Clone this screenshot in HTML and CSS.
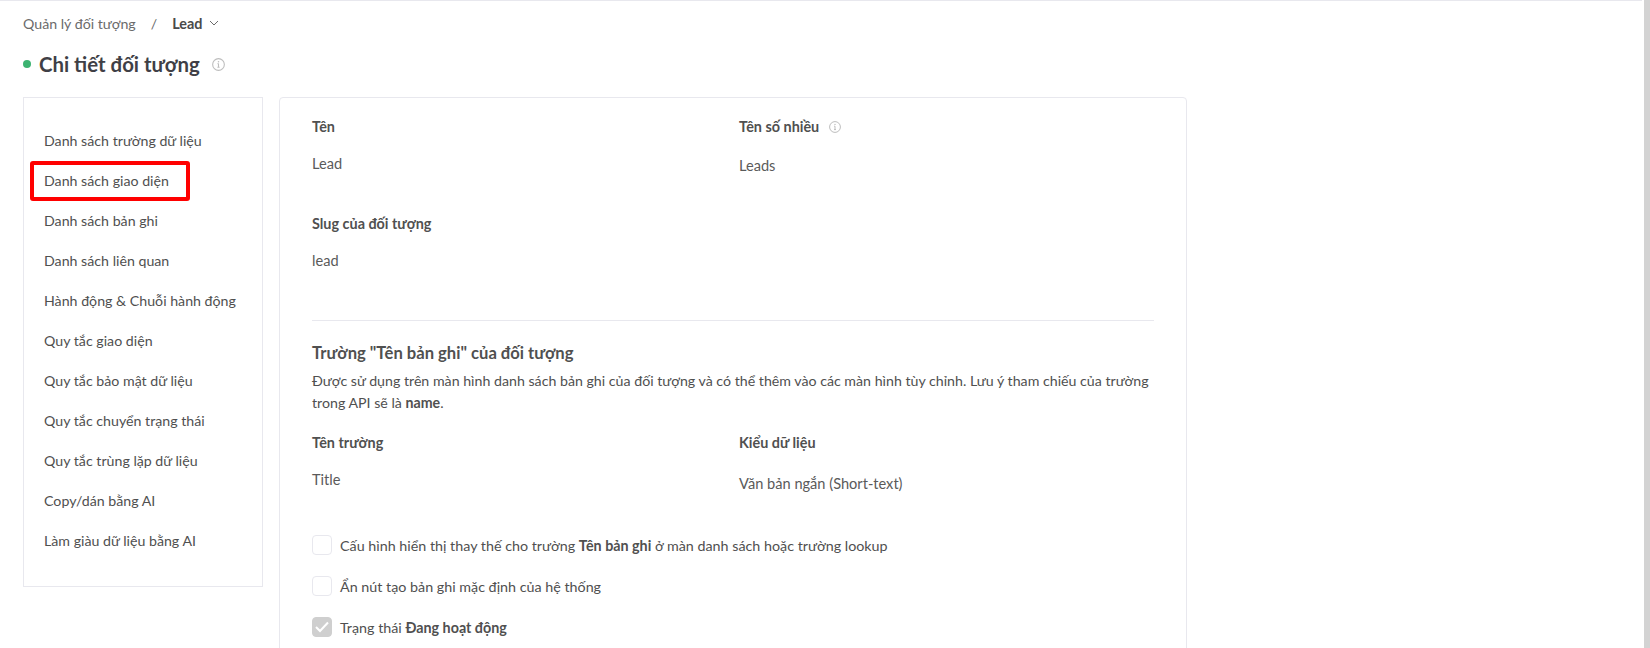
FILE: index.html
```html
<!DOCTYPE html>
<html lang="vi">
<head>
    <meta charset="UTF-8">
    <meta name="viewport" content="width=device-width, initial-scale=1.0">
    <title>Chi tiết đối tượng</title>
    <link rel="stylesheet" href="styles.css">
</head>
<body>
    <div class="page">
        <div class="breadcrumb">
            <span class="crumb">Quản lý đối tượng</span>
            <span class="crumb-sep">/</span>
            <span class="crumb-current">Lead</span>
            <svg class="chevron" width="10" height="10" viewBox="0 0 10 10"><path d="M1 3l4 4 4-4" fill="none" stroke="#6b6b6b" stroke-width="1"/></svg>
        </div>

        <div class="title-row">
            <span class="status-dot"></span>
            <h1>Chi tiết đối tượng</h1>
            <svg class="info info-lg" viewBox="0 0 12 12"><circle cx="6" cy="6" r="5.4" fill="none" stroke="#bdbdbd"/><path d="M6 5.2v3.2M5 8.6h2M5.1 5.2H6" fill="none" stroke="#bdbdbd"/><circle cx="6" cy="3.4" r=".7" fill="#bdbdbd"/></svg>
        </div>

        <div class="layout">
            <nav class="sidebar">
                <a class="nav-item">Danh sách trường dữ liệu</a>
                <a class="nav-item nav-marked">Danh sách giao diện</a>
                <a class="nav-item">Danh sách bản ghi</a>
                <a class="nav-item">Danh sách liên quan</a>
                <a class="nav-item">Hành động &amp; Chuỗi hành động</a>
                <a class="nav-item">Quy tắc giao diện</a>
                <a class="nav-item">Quy tắc bảo mật dữ liệu</a>
                <a class="nav-item">Quy tắc chuyển trạng thái</a>
                <a class="nav-item">Quy tắc trùng lặp dữ liệu</a>
                <a class="nav-item">Copy/dán bằng AI</a>
                <a class="nav-item">Làm giàu dữ liệu bằng AI</a>
            </nav>

            <main class="card">
                <div class="field-grid">
                    <div class="field">
                        <div class="field-label">Tên</div>
                        <div class="field-value">Lead</div>
                    </div>
                    <div class="field">
                        <div class="field-label">Tên số nhiều
                            <svg class="info" viewBox="0 0 12 12"><circle cx="6" cy="6" r="5.4" fill="none" stroke="#bdbdbd"/><path d="M6 5.2v3.2M5 8.6h2M5.1 5.2H6" fill="none" stroke="#bdbdbd"/><circle cx="6" cy="3.4" r=".7" fill="#bdbdbd"/></svg>
                        </div>
                        <div class="field-value value-low">Leads</div>
                    </div>
                    <div class="field field-slug">
                        <div class="field-label">Slug của đối tượng</div>
                        <div class="field-value">lead</div>
                    </div>
                </div>

                <hr class="divider">

                <h2>Trường "Tên bản ghi" của đối tượng</h2>
                <p class="desc">Được sử dụng trên màn hình danh sách bản ghi của đối tượng và có thể thêm vào các màn hình tùy chỉnh. Lưu ý tham chiếu của trường trong API sẽ là <b>name</b>.</p>

                <div class="field-grid">
                    <div class="field">
                        <div class="field-label">Tên trường</div>
                        <div class="field-value">Title</div>
                    </div>
                    <div class="field">
                        <div class="field-label">Kiểu dữ liệu</div>
                        <div class="field-value value-lower">Văn bản ngắn (Short-text)</div>
                    </div>
                </div>

                <div class="checks">
                    <label class="check"><span class="box"></span><span>Cấu hình hiển thị thay thế cho trường <b>Tên bản ghi</b> ở màn danh sách hoặc trường lookup</span></label>
                    <label class="check"><span class="box"></span><span>Ẩn nút tạo bản ghi mặc định của hệ thống</span></label>
                    <label class="check"><span class="box box-checked"><svg width="14" height="14" viewBox="0 0 14 14"><path d="M1 7l4 4 8-8.5" fill="none" stroke="#fff" stroke-width="2"/></svg></span><span>Trạng thái <b>Đang hoạt động</b></span></label>
                </div>
            </main>
        </div>
    </div>
    <div class="scroll-rail"></div>
</body>
</html>
```
FILE: styles.css
```css
* {
    box-sizing: border-box;
}

html, body {
    margin: 0;
    height: 100%;
    overflow: hidden;
    background-color: white;
    font-family: Lato, "Noto Sans", sans-serif;
    font-size: 14.2px;
    color: #505050;
}

body {
    display: flex;
    gap: 2px;
}

.page {
    flex: 1;
    height: 100vh;
    overflow: hidden;
    padding-left: 23px;
    border-top: 1px solid #e8e8ee;
}

.scroll-rail {
    width: 6px;
    background-color: #d3d3d3;
}

.breadcrumb {
    display: flex;
    align-items: center;
    height: 22px;
    margin-top: 11px;
    color: #6b6b6b;
}

.crumb-sep {
    margin: 0 15px;
}

.crumb-current {
    font-weight: 700;
    font-size: 14.4px;
    color: #4a4a4a;
    margin-right: 7px;
}

.title-row {
    display: flex;
    align-items: center;
    height: 30px;
    margin-top: 15px;
}

.status-dot {
    width: 8px;
    height: 8px;
    border-radius: 50%;
    background-color: #3cb371;
    margin-right: 8px;
}

h1 {
    margin: 0 12px 0 0;
    font-size: 20.4px;
    font-weight: 700;
    color: #3f3f46;
}

.info {
    width: 12px;
    height: 12px;
    margin-left: 6px;
    vertical-align: -1px;
}

.info-lg {
    width: 13px;
    height: 13px;
    margin-left: 0;
}

.layout {
    display: flex;
    align-items: flex-start;
    gap: 16px;
    margin-top: 18px;
}

.sidebar {
    width: 240px;
    height: 490px;
    padding: 23px 0;
    border: 1px solid #e8e8ee;
    flex-shrink: 0;
}

.nav-item {
    display: flex;
    align-items: center;
    height: 40px;
    padding: 0 0 2px 20px;
    white-space: nowrap;
}

.nav-marked {
    position: relative;
}

.nav-marked::after {
    content: "";
    position: absolute;
    left: 6px;
    top: 0;
    width: 160px;
    height: 40px;
    box-sizing: border-box;
    border: 4px solid #ff0000;
    border-radius: 3px;
}

.card {
    width: 908px;
    height: 700px;
    padding: 20px 32px;
    border: 1px solid #e8e8ee;
    border-radius: 4px;
    flex-shrink: 0;
}

.field-grid {
    display: grid;
    grid-template-columns: 427px 1fr;
}

.field-label {
    font-weight: 700;
    font-size: 14.4px;
    height: 20px;
}

.field-value {
    margin-top: 17px;
    height: 20px;
    font-size: 14.6px;
    color: #5a5a5a;
}

.value-low {
    margin-top: 19px;
}

.value-lower {
    margin-top: 21px;
}

.field-slug {
    margin-top: 38px;
}

.divider {
    border: none;
    border-top: 1px solid #e8e8ee;
    margin: 48px 0 0;
}

h2 {
    margin: 21px 0 0;
    font-size: 16.6px;
    line-height: 22px;
    font-weight: 700;
}

.desc {
    margin: 6px 0 20px;
    line-height: 22px;
}

.checks {
    display: flex;
    flex-direction: column;
    gap: 21px;
    margin-top: 40px;
}

.check {
    display: flex;
    align-items: center;
    height: 20px;
    font-size: 14.3px;
    white-space: nowrap;
}

.box {
    display: flex;
    align-items: center;
    justify-content: center;
    width: 20px;
    height: 20px;
    margin-right: 8px;
    border: 1px solid #e8e8ee;
    border-radius: 4px;
}

.box-checked {
    background-color: #cfcfcf;
    border-color: #cfcfcf;
}
```
